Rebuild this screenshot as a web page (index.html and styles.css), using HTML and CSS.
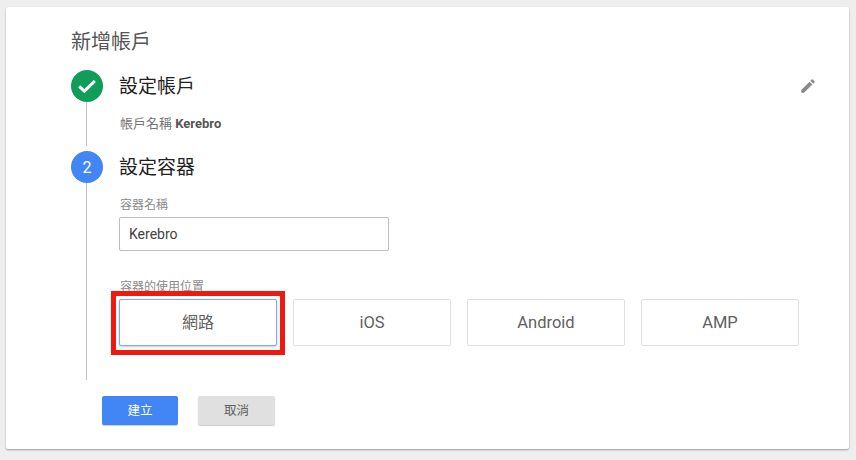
FILE: index.html
```html
<!DOCTYPE html>
<html lang="zh-Hant">
<head>
<meta charset="utf-8">
<title>新增帳戶</title>
<link rel="stylesheet" href="styles.css">
</head>
<body>
<main class="card">
  <h1 class="title">新增帳戶</h1>
  <section class="step step-done">
    <div class="rail">
      <span class="badge badge-green">
        <svg width="20" height="20" viewBox="0 0 20 20"><path d="M2.2 10.4l5.2 4.7L17.9 5" fill="none" stroke="#fff" stroke-width="3"/></svg>
      </span>
      <span class="line"></span>
    </div>
    <div class="body">
      <div class="step-head">
        <h2 class="step-title">設定帳戶</h2>
        <svg class="edit" width="18" height="18" viewBox="0 0 24 24"><path fill="#8a8a8a" d="M3 17.25V21h3.75L17.81 9.94l-3.75-3.75L3 17.25zM20.71 7.04a1 1 0 0 0 0-1.41l-2.34-2.34a1 1 0 0 0-1.41 0l-1.83 1.83 3.75 3.75 1.83-1.83z"/></svg>
      </div>
      <p class="summary">帳戶名稱 <b>Kerebro</b></p>
    </div>
  </section>
  <section class="step step-active">
    <div class="rail">
      <span class="badge badge-blue">2</span>
      <span class="line"></span>
    </div>
    <div class="body">
      <div class="step-head">
        <h2 class="step-title">設定容器</h2>
      </div>
      <label class="label label-name" for="name">容器名稱</label>
      <input class="input" id="name" value="Kerebro">
      <div class="label label-where">容器的使用位置</div>
      <div class="targets">
        <button class="target target-selected"><span class="target-cjk">網路</span><span class="highlight"></span></button>
        <button class="target">iOS</button>
        <button class="target">Android</button>
        <button class="target">AMP</button>
      </div>
    </div>
  </section>
  <div class="actions">
    <button class="btn btn-primary">建立</button>
    <button class="btn btn-cancel">取消</button>
  </div>
</main>
</body>
</html>
```
FILE: styles.css
```css
* { box-sizing: border-box; }
html, body { height: 100%; }
body {
  margin: 0;
  padding: 7px 7px 11px 6px;
  background: #eeeeee;
  font-family: Roboto, "Noto Sans CJK TC", "Liberation Sans", sans-serif;
  overflow: hidden;
}
.card {
  height: 442px;
  background: #fff;
  border-radius: 2px;
  box-shadow: 0 1px 2px rgba(0,0,0,.35);
  padding: 21px 32px 0 65px;
  display: flex;
  flex-direction: column;
}
.title {
  margin: 0 0 14px;
  font-size: 20px;
  line-height: 28px;
  font-weight: 400;
  color: #555;
}
.step { display: flex; }
.rail {
  flex: none;
  display: flex;
  flex-direction: column;
  align-items: center;
  width: 32px;
}
.badge {
  width: 32px;
  height: 32px;
  flex: none;
  border-radius: 50%;
  display: flex;
  align-items: center;
  justify-content: center;
  color: #fff;
  font-size: 16px;
}
.badge-green { background: #0f9d58; }
.badge-blue { background: #4285f4; }
.line { width: 1px; margin-right: 1px; background: #c4c4c4; flex: 1; }
.step-done .line { margin-bottom: 5px; }
.step-done { height: 81px; }
.step-active { height: 229px; }
.body { flex: 1; margin-left: 16px; display: flex; flex-direction: column; }
.step-head {
  height: 32px;
  padding-bottom: 3px;
  display: flex;
  align-items: center;
  justify-content: space-between;
}
.step-title { margin: 0; font-size: 19px; font-weight: 400; color: #212121; }
.edit { margin-top: 3px; }
.summary {
  margin: 13px 0 0 1px;
  font-size: 13px;
  line-height: 18px;
  color: #757575;
}
.summary b { color: #555; font-weight: 700; }
.label {
  font-size: 12px;
  line-height: 14px;
  color: #8a8a8a;
  margin-left: 1px;
}
.label-name { margin-top: 15px; }
.input {
  width: 270px;
  height: 34px;
  margin: 5px 0 0;
  padding: 0 8px 0 9px;
  border: 1px solid #bdbdbd;
  border-radius: 2px;
  font: 14px Roboto, sans-serif;
  color: #424242;
  outline: none;
}
.label-where { margin-top: 29px; }
.targets { display: flex; gap: 16px; margin-top: 5px; }
.target {
  position: relative;
  width: 158px;
  height: 47px;
  padding: 0;
  background: #fff;
  border: 1px solid #e0e0e0;
  border-radius: 2px;
  font: 16.5px Roboto, "Noto Sans CJK TC", sans-serif;
  color: #616161;
}
.target-cjk { display: block; margin-top: -4px; font-size: 16px; }
.target-selected {
  border-color: #7baaf7;
  box-shadow: 0 1px 3px rgba(0,0,0,.22);
}
.highlight {
  position: absolute;
  left: -9px;
  top: -9px;
  width: 174px;
  height: 64px;
  border: 5px solid #ee1a12;
}
.actions {
  display: flex;
  gap: 20px;
  margin: 16px 0 0 31px;
}
.btn {
  height: 29px;
  width: 76px;
  padding: 0 0 2px;
  border: 0;
  border-radius: 2px;
  font: 12.5px Roboto, "Noto Sans CJK TC", sans-serif;
  box-shadow: 0 1px 1px rgba(0,0,0,.2);
}
.btn-primary { background: #4285f4; color: #fff; }
.btn-cancel { background: #e0e0e0; color: #616161; width: 77px; }
```
